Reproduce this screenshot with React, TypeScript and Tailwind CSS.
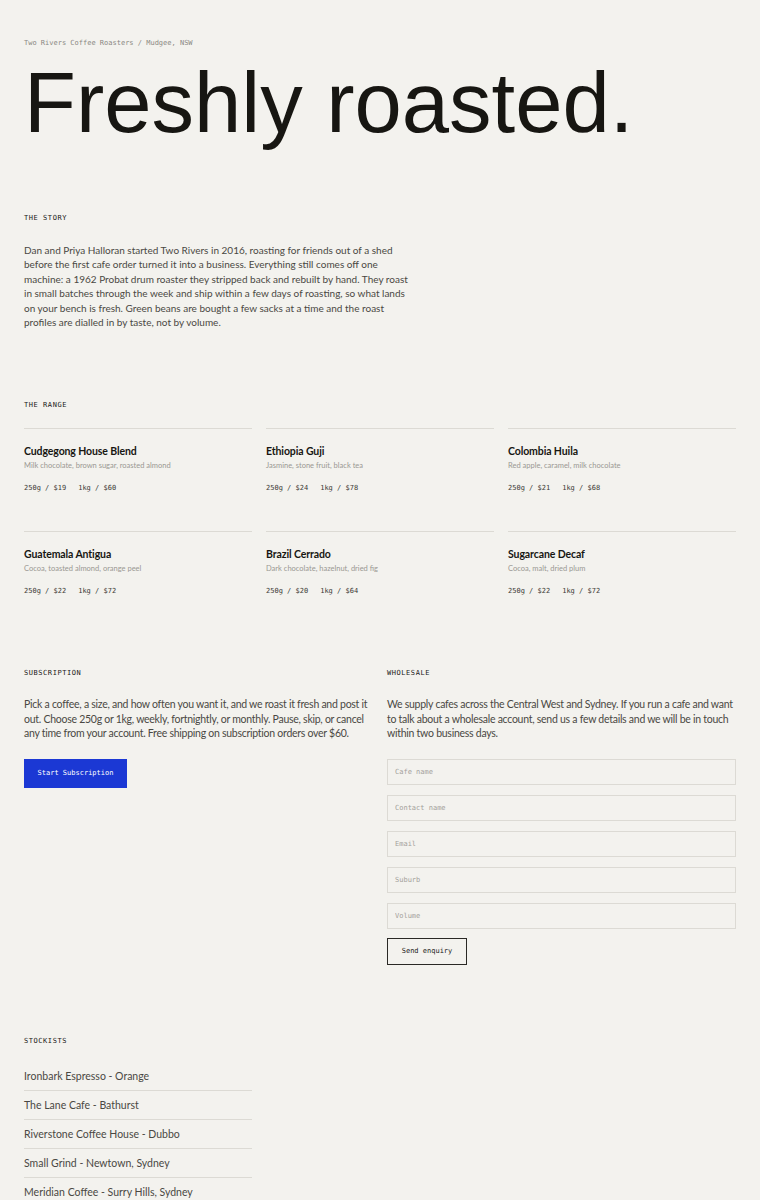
const mono = "font-['DejaVu_Sans_Mono','Liberation_Mono',monospace]"
const sans = "font-['Lato','Noto_Sans',sans-serif]"

const coffees = [
  { name: 'Cudgegong House Blend', notes: 'Milk chocolate, brown sugar, roasted almond', small: '$19', large: '$60' },
  { name: 'Ethiopia Guji', notes: 'Jasmine, stone fruit, black tea', small: '$24', large: '$78' },
  { name: 'Colombia Huila', notes: 'Red apple, caramel, milk chocolate', small: '$21', large: '$68' },
  { name: 'Guatemala Antigua', notes: 'Cocoa, toasted almond, orange peel', small: '$22', large: '$72' },
  { name: 'Brazil Cerrado', notes: 'Dark chocolate, hazelnut, dried fig', small: '$20', large: '$64' },
  { name: 'Sugarcane Decaf', notes: 'Cocoa, malt, dried plum', small: '$22', large: '$72' },
]

const stockists = [
  'Ironbark Espresso - Orange',
  'The Lane Cafe - Bathurst',
  'Riverstone Coffee House - Dubbo',
  'Small Grind - Newtown, Sydney',
  'Meridian Coffee - Surry Hills, Sydney',
]

const fields = ['Cafe name', 'Contact name', 'Email', 'Suburb', 'Volume']

function Label({ children }: { children: string }) {
  return (
    <h2 className={`${mono} text-[7px] leading-[9px] tracking-[0.08em] uppercase text-[#1a1917]`}>{children}</h2>
  )
}

export default function App() {
  return (
    <div className={`min-h-screen bg-[#f3f2ee] text-[#1a1917] px-6 ${sans}`}>
      {/* Header */}
      <header className="pt-[39px]">
        <p className={`${mono} text-[7px] leading-[9px] text-[#8a8883]`}>Two Rivers Coffee Roasters / Mudgee, NSW</p>
        <h1 className="mt-[12px] font-['Liberation_Sans',Arial,sans-serif] text-[85px] leading-[1] text-[#171612]">
          Freshly roasted.
        </h1>
      </header>

      {/* Story */}
      <section className="mt-[69px]">
        <Label>The story</Label>
        <p className="mt-[20px] max-w-[386px] text-[10px] leading-[14.4px] text-[#4a4843]">
          Dan and Priya Halloran started Two Rivers in 2016, roasting for friends out of a shed before the first cafe
          order turned it into a business. Everything still comes off one machine: a 1962 Probat drum roaster they
          stripped back and rebuilt by hand. They roast in small batches through the week and ship within a few days of
          roasting, so what lands on your bench is fresh. Green beans are bought a few sacks at a time and the roast
          profiles are dialled in by taste, not by volume.
        </p>
      </section>

      {/* Range */}
      <section className="mt-[72px]">
        <Label>The range</Label>
        <div className="mt-[18px] grid grid-cols-3 gap-x-[14px]">
          {coffees.map((c) => (
            <div key={c.name} className="border-t border-[#dcdad4] pt-[15px] h-[103px]">
              <h3 className="text-[10.5px] leading-[14px] font-bold tracking-[-0.01em] text-[#171612]">{c.name}</h3>
              <p className="mt-[3px] text-[7.5px] leading-[10px] text-[#9a9893]">{c.notes}</p>
              <p className={`${mono} mt-[13px] flex gap-[12px] text-[7px] leading-[9px] text-[#3a3935]`}>
                <span>250g / {c.small}</span>
                <span>1kg / {c.large}</span>
              </p>
            </div>
          ))}
        </div>
      </section>

      {/* Subscription + wholesale */}
      <section className="mt-[35px] grid grid-cols-2 gap-x-[14px]">
        <div>
          <Label>Subscription</Label>
          <p className="mt-[19px] text-[10.5px] leading-[14.5px] tracking-[-0.025em] text-[#4a4843]">
            Pick a coffee, a size, and how often you want it, and we roast it fresh and post it out. Choose 250g or
            1kg, weekly, fortnightly, or monthly. Pause, skip, or cancel any time from your account. Free shipping on
            subscription orders over $60.
          </p>
          <button className={`${mono} mt-[18px] h-[29px] w-[103px] bg-[#1b38d4] text-[7px] text-white`}>
            Start Subscription
          </button>
        </div>
        <div>
          <Label>Wholesale</Label>
          <p className="mt-[19px] text-[10.5px] leading-[14.5px] tracking-[-0.025em] text-[#4a4843]">
            We supply cafes across the Central West and Sydney. If you run a cafe and want to talk about a wholesale
            account, send us a few details and we will be in touch within two business days.
          </p>
          <form className="mt-[18px] flex flex-col gap-[10px]">
            {fields.map((f) => (
              <input
                key={f}
                placeholder={f}
                className={`${mono} h-[26px] w-full border border-[#dcdad4] bg-transparent px-[7px] text-[7px] placeholder:text-[#a3a19b] outline-none`}
              />
            ))}
            <button
              type="button"
              className={`${mono} mt-[-1px] h-[27px] w-[80px] border border-[#2a2925] text-[7px] text-[#1a1917]`}
            >
              Send enquiry
            </button>
          </form>
        </div>
      </section>

      {/* Stockists */}
      <section className="mt-[72px] pb-10">
        <Label>Stockists</Label>
        <ul className="mt-[16px] w-[228px]">
          {stockists.map((s) => (
            <li key={s} className="border-b border-[#dcdad4] py-[7px] text-[10.5px] leading-[14px] text-[#4a4843]">
              {s}
            </li>
          ))}
        </ul>
      </section>
    </div>
  )
}
